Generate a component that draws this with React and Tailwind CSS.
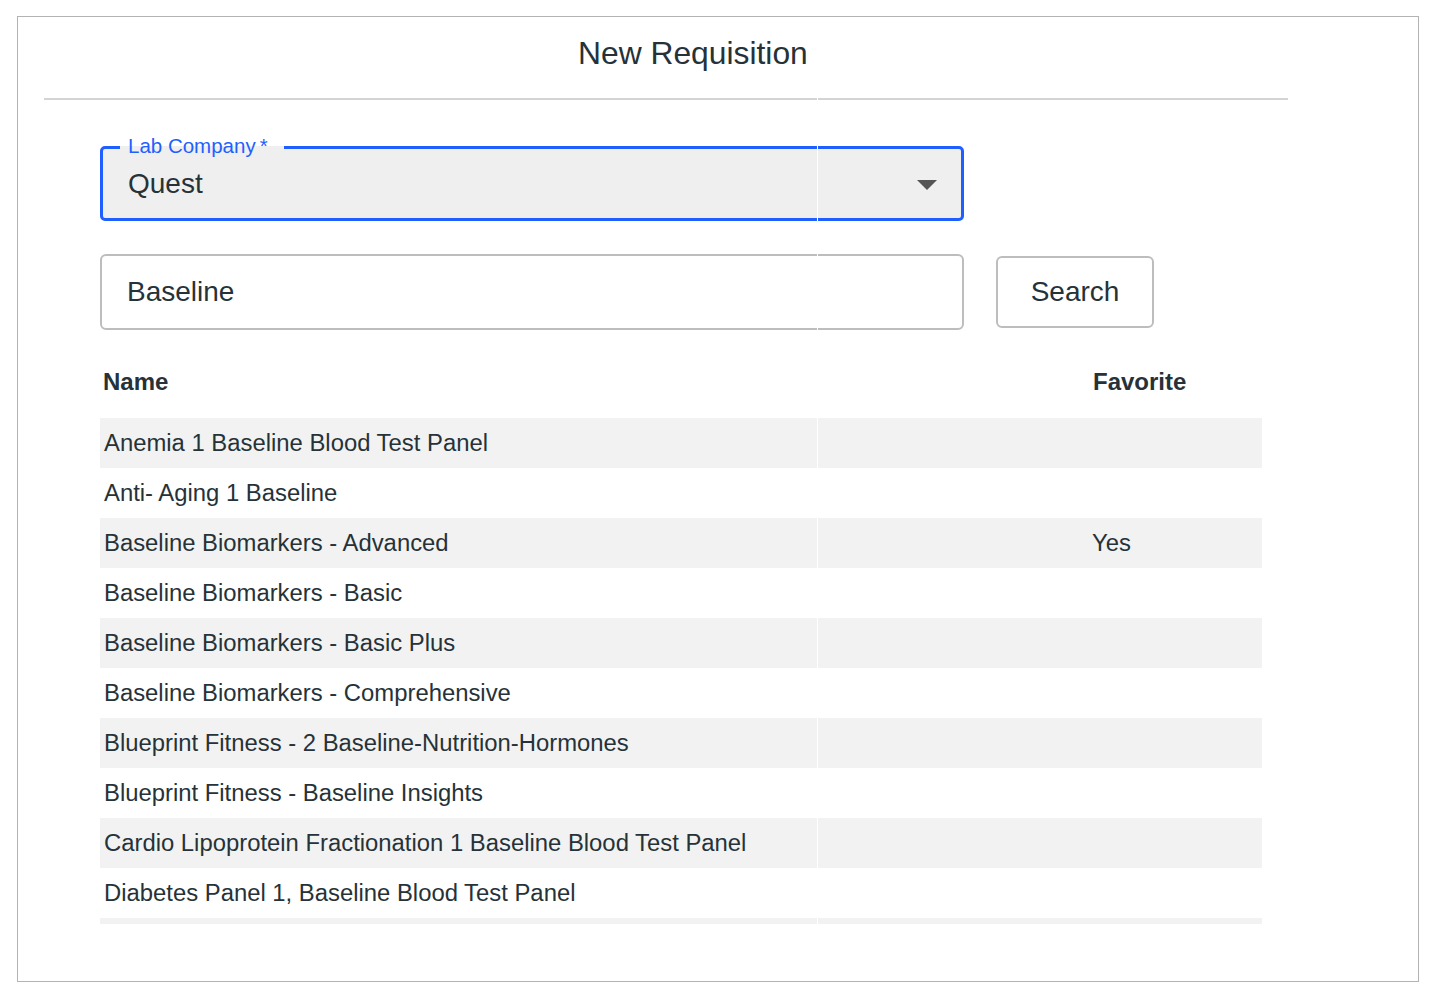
import React from 'react'

const rows = [
  { name: 'Anemia 1 Baseline Blood Test Panel', fav: '' },
  { name: 'Anti- Aging 1 Baseline', fav: '' },
  { name: 'Baseline Biomarkers - Advanced', fav: 'Yes' },
  { name: 'Baseline Biomarkers - Basic', fav: '' },
  { name: 'Baseline Biomarkers - Basic Plus', fav: '' },
  { name: 'Baseline Biomarkers - Comprehensive', fav: '' },
  { name: 'Blueprint Fitness - 2 Baseline-Nutrition-Hormones', fav: '' },
  { name: 'Blueprint Fitness - Baseline Insights', fav: '' },
  { name: 'Cardio Lipoprotein Fractionation 1 Baseline Blood Test Panel', fav: '' },
  { name: 'Diabetes Panel 1, Baseline Blood Test Panel', fav: '' },
  { name: '', fav: '' },
]

function App() {
  return (
    <div className="min-h-screen bg-white pt-[16px] pl-[17px] font-['Liberation_Sans',Arial,sans-serif] text-[#263238]">
      <div className="relative w-[1402px] h-[966px] border border-[#b3b3b3]">
        {/* Header */}
        <div className="h-[74px] flex items-center pl-[560px] text-[31.8px]">New Requisition</div>
        <div className="ml-[26px] mt-[7px] w-[1244px] h-[2px] bg-[#d4d4d4]" />

        <div className="pl-[82px] pt-[46px]">
          {/* Lab company select */}
          <div className="relative w-[864px] h-[75px] rounded-[5px] border-[3px] border-[#1f5fff] bg-[#efefef] flex items-center pl-[25px] pr-[24px]">
            <div className="absolute left-[17px] top-[-3px] w-[164px] h-[3px] bg-[#efefef]" />
            <span className="absolute left-[25px] top-[-13px] text-[20.5px] leading-none text-[#1f5fff] whitespace-nowrap">
              Lab Company{'\u2009'}*
            </span>
            <span className="text-[28px]">Quest</span>
            <svg className="ml-auto mt-[2px]" width="20" height="10" viewBox="0 0 20 10">
              <polygon points="0,0 20,0 10,10" fill="#555555" />
            </svg>
          </div>

          {/* Search row */}
          <div className="mt-[33px] flex items-center gap-[32px]">
            <div className="w-[864px] h-[76px] rounded-[6px] border-2 border-[#bdbdbd] flex items-center pl-[25px] text-[28px]">
              Baseline
            </div>
            <button className="w-[158px] h-[72px] rounded-[6px] border-2 border-[#bdbdbd] bg-white text-[28px] text-[#263238]">
              Search
            </button>
          </div>

          {/* Table */}
          <div className="mt-[27px] w-[1162px]">
            <div className="h-[50px] flex items-center font-bold text-[24px]">
              <div className="flex-1 pl-[3px]">Name</div>
              <div className="w-[173px] pl-[4px]">Favorite</div>
            </div>
            <div className="mt-[11px] h-[506px] overflow-hidden">
              {rows.map((r, i) => (
                <div
                  key={i}
                  className={`h-[50px] flex items-center text-[23.85px] ${i % 2 === 0 ? 'bg-[#f2f2f2]' : 'bg-white'}`}
                >
                  <div className="flex-1 pl-[4px] whitespace-nowrap">{r.name}</div>
                  <div className="w-[173px] pl-[3px]">{r.fav}</div>
                </div>
              ))}
            </div>
          </div>
        </div>

        {/* thin seam line over the content */}
        <div className="absolute left-[799px] top-[80px] w-px h-[828px] bg-white" />
      </div>
    </div>
  )
}

export default App
